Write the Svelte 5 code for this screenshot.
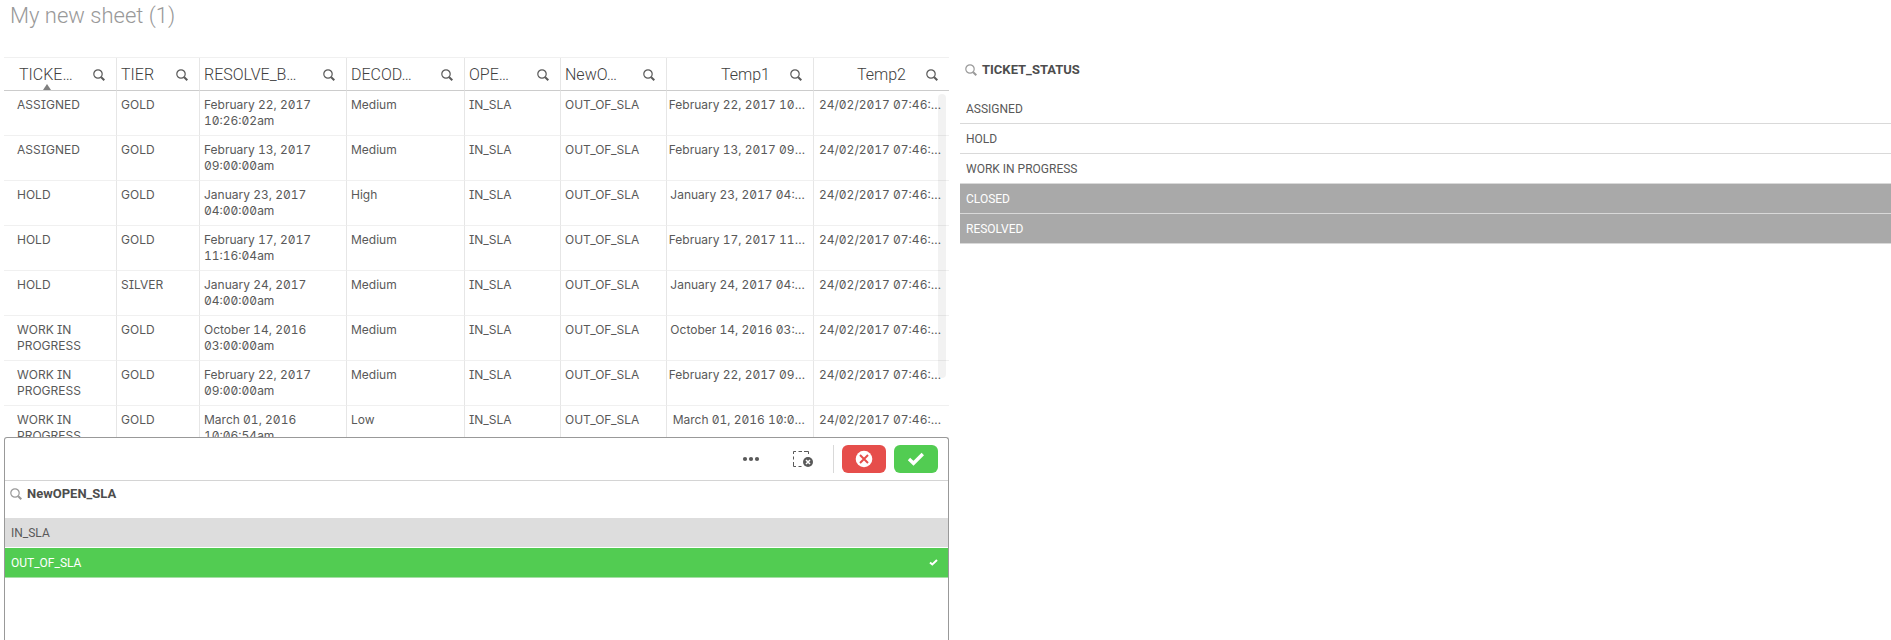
<script lang="ts">
    type Column = { label: string, width: number, measure?: boolean, sorted?: boolean }

    const columns: Column[] = [
        { label: 'TICKE…', width: 113, sorted: true },
        { label: 'TIER', width: 83 },
        { label: 'RESOLVE_B…', width: 147 },
        { label: 'DECOD…', width: 118 },
        { label: 'OPE…', width: 96 },
        { label: 'NewO…', width: 106 },
        { label: 'Temp1', width: 147, measure: true },
        { label: 'Temp2', width: 135, measure: true },
    ]
    const total = columns.reduce((sum, c) => sum + c.width, 0)

    const now = '24/02/2017 07:46:…'
    const rows = [
        ['ASSIGNED', 'GOLD', 'February 22, 2017 10:26:02am', 'Medium', 'IN_SLA', 'OUT_OF_SLA', 'February 22, 2017 10…', now],
        ['ASSIGNED', 'GOLD', 'February 13, 2017 09:00:00am', 'Medium', 'IN_SLA', 'OUT_OF_SLA', 'February 13, 2017 09…', now],
        ['HOLD', 'GOLD', 'January 23, 2017 04:00:00am', 'High', 'IN_SLA', 'OUT_OF_SLA', 'January 23, 2017 04:…', now],
        ['HOLD', 'GOLD', 'February 17, 2017 11:16:04am', 'Medium', 'IN_SLA', 'OUT_OF_SLA', 'February 17, 2017 11…', now],
        ['HOLD', 'SILVER', 'January 24, 2017 04:00:00am', 'Medium', 'IN_SLA', 'OUT_OF_SLA', 'January 24, 2017 04:…', now],
        ['WORK IN PROGRESS', 'GOLD', 'October 14, 2016 03:00:00am', 'Medium', 'IN_SLA', 'OUT_OF_SLA', 'October 14, 2016 03:…', now],
        ['WORK IN PROGRESS', 'GOLD', 'February 22, 2017 09:00:00am', 'Medium', 'IN_SLA', 'OUT_OF_SLA', 'February 22, 2017 09…', now],
        ['WORK IN PROGRESS', 'GOLD', 'March 01, 2016 10:06:54am', 'Low', 'IN_SLA', 'OUT_OF_SLA', 'March 01, 2016 10:0…', now],
    ]

    const statuses = [
        { name: 'ASSIGNED', state: 'possible' },
        { name: 'HOLD', state: 'possible' },
        { name: 'WORK IN PROGRESS', state: 'possible' },
        { name: 'CLOSED', state: 'excluded' },
        { name: 'RESOLVED', state: 'excluded' },
    ]

    const slaValues = ['IN_SLA', 'OUT_OF_SLA']
    let selected = $state('OUT_OF_SLA')
</script>

{#snippet searchIcon()}
    <svg class="search-icon" viewBox="0 0 12 12" aria-hidden="true">
        <circle cx="5" cy="5" r="4.2" />
        <path class="handle" d="M8.2 8.2 L11.3 11.2" />
    </svg>
{/snippet}

<div class="sheet">
    <h1>My new sheet (1)</h1>
    <main>
        <section class="left">
            <div class="table-wrap">
                <table>
                    <colgroup>
                        {#each columns as c}
                            <col style="width: {c.width / total * 100}%">
                        {/each}
                    </colgroup>
                    <thead>
                        <tr>
                            {#each columns as c}
                                <th class:measure={c.measure} class:sorted={c.sorted}>
                                    <div class="head">
                                        <span>{c.label}</span>
                                        <button class="icon" aria-label="Search {c.label}">{@render searchIcon()}</button>
                                    </div>
                                </th>
                            {/each}
                        </tr>
                    </thead>
                    <tbody>
                        {#each rows as row}
                            <tr>
                                {#each row as cell, i}
                                    <td class:measure={columns[i].measure}>{cell}</td>
                                {/each}
                            </tr>
                        {/each}
                    </tbody>
                </table>
                <div class="scrollbar"></div>
            </div>

            <div class="popup">
                <div class="toolbar">
                    <button class="tool" aria-label="More">
                        <svg width="18" height="6" viewBox="0 0 18 6">
                            <circle cx="3" cy="3" r="2.1" /><circle cx="9" cy="3" r="2.1" /><circle cx="15" cy="3" r="2.1" />
                        </svg>
                    </button>
                    <button class="tool" aria-label="Clear selection">
                        <svg width="20" height="17" viewBox="0 0 20 17">
                            <path class="dash" d="M.5 3V.5H3M5.5 .5H9M11 .5H15.5V3M.5 5.5V8.5M.5 11V15.5H3M5.5 15.5H8.5" />
                            <circle cx="15" cy="11" r="5" />
                            <path class="cross" d="M13 9L17 13M17 9L13 13" />
                        </svg>
                    </button>
                    <span class="divider"></span>
                    <button class="action cancel" aria-label="Cancel selection">
                        <svg width="18" height="18" viewBox="0 0 18 18">
                            <circle cx="9" cy="9" r="8.3" />
                            <path d="M5 5L13 13M13 5L5 13" />
                        </svg>
                    </button>
                    <button class="action confirm" aria-label="Confirm selection">
                        <svg width="18" height="14" viewBox="0 0 18 14"><path d="M2 7L6.5 11.3L15.8 2" /></svg>
                    </button>
                </div>
                <h2>
                    <button class="icon" aria-label="Search NewOPEN_SLA">{@render searchIcon()}</button>
                    NewOPEN_SLA
                </h2>
                <ul>
                    {#each slaValues as name}
                        <li>
                            <button class="value {name === selected ? 'selected' : 'alternative'}" onclick={() => selected = name}>
                                {name}
                                {#if name === selected}
                                    <svg width="9" height="7" viewBox="0 0 9 7"><path d="M1 3.5L3.3 5.5L8 1" /></svg>
                                {/if}
                            </button>
                        </li>
                    {/each}
                </ul>
            </div>
        </section>

        <section class="right">
            <h2>
                <button class="icon" aria-label="Search TICKET_STATUS">{@render searchIcon()}</button>
                TICKET_STATUS
            </h2>
            <ul>
                {#each statuses as s}
                    <li><button class="value {s.state}">{s.name}</button></li>
                {/each}
            </ul>
        </section>
    </main>
</div>

<style>
:global(body){
    background: #fff;
}

*{
    box-sizing: border-box;
}

.sheet{
    display: flex;
    flex-direction: column;
    height: 100vh;
    overflow: hidden;
    color: #595959;
    font-family: Roboto, "Liberation Sans", sans-serif;
}

h1{
    margin: 0;
    padding: 0 10px;
    height: 57px;
    flex: none;
    font-size: 22px;
    line-height: 32px;
    font-weight: 300;
    color: #999;
}

main{
    display: grid;
    grid-template-columns: 945fr 931fr;
    column-gap: 11px;
    flex: 1;
    min-height: 0;
    padding-left: 4px;
}

.left{
    display: grid;
    grid-template-rows: 380fr 203fr;
    min-width: 0;
    min-height: 0;
}

.table-wrap{
    position: relative;
    overflow: hidden;
    min-height: 0;
    border-top: 1px solid #f0f0f0;
}

table{
    width: 100%;
    table-layout: fixed;
    border-collapse: separate;
    border-spacing: 0;
}

th, td{
    border-right: 1px solid #e6e6e6;
    text-align: left;
    font-weight: 400;
}

th:last-child, td:last-child{
    border-right: 0;
}

th{
    position: relative;
    height: 33px;
    padding: 2px 11px 0 4px;
    border-bottom: 1px solid #ccc;
    font-size: 16px;
    line-height: 20px;
    font-weight: 300;
    color: #404040;
}

th:first-child{
    padding-left: 15px;
}

.head{
    display: flex;
    align-items: center;
    justify-content: space-between;
    white-space: nowrap;
}

.measure .head{
    justify-content: flex-end;
    gap: 20px;
}

.sorted::after{
    content: '';
    position: absolute;
    left: 39px;
    bottom: 0;
    border: 4px solid transparent;
    border-top: 0;
    border-bottom: 6px solid #808080;
}

td{
    height: 45px;
    padding: 6px 8px 6px 4px;
    border-bottom: 1px solid #f0f0f0;
    vertical-align: top;
    font-family: Inter, Roboto, sans-serif;
    font-size: 12px;
    line-height: 16px;
    font-feature-settings: 'zero', 'tnum', 'cv08';
}

td:first-child{
    padding-left: 13px;
}

td.measure{
    padding-left: 0;
    text-align: right;
    white-space: nowrap;
}

.scrollbar{
    position: absolute;
    top: 36px;
    right: 3px;
    width: 8px;
    height: 75%;
    border-radius: 4px;
    background: rgba(0, 0, 0, .05);
}

button{
    border: 0;
    padding: 0;
    background: none;
    color: inherit;
    font: inherit;
    cursor: pointer;
}

.icon, .icon svg{
    display: block;
    width: 12px;
    height: 12px;
}

.search-icon{
    fill: none;
    stroke: #595959;
    stroke-width: 1.2;
}

.search-icon .handle{
    stroke-width: 2;
}

h2 .search-icon{
    stroke: #999;
}

h2 .handle{
    stroke-width: 1.5;
}

.popup{
    min-height: 0;
    background: #fff;
    border: 1px solid #999;
    border-bottom: 0;
    border-radius: 3px 3px 0 0;
}

.toolbar{
    display: flex;
    align-items: center;
    justify-content: flex-end;
    gap: 8px;
    height: 43px;
    padding: 0 10px 0 0;
    border-bottom: 1px solid #d4d4d4;
}

.tool{
    display: grid;
    place-items: center;
    width: 44px;
    height: 28px;
    fill: #595959;
}

.dash{
    fill: none;
    stroke: #595959;
}

.cross{
    stroke: #fff;
    stroke-width: 1.5;
}

.divider{
    width: 1px;
    height: 28px;
    background: #d9d9d9;
}

.action{
    display: grid;
    place-items: center;
    width: 44px;
    height: 28px;
    border-radius: 6px;
}

.cancel{
    background: #e64e4b;
}

.cancel circle{
    fill: #fff;
}

.cancel path{
    stroke: #e64e4b;
    stroke-width: 2;
}

.confirm{
    background: #52cc52;
}

.confirm path{
    fill: none;
    stroke: #fff;
    stroke-width: 3.4;
}

h2{
    display: flex;
    align-items: center;
    gap: 5px;
    height: 37px;
    margin: 0;
    padding: 0 5px 12px;
    font-size: 13px;
    font-weight: 700;
    color: #4d4d4d;
}

ul{
    margin: 0;
    padding: 0;
    list-style: none;
}

.value{
    display: flex;
    align-items: center;
    justify-content: space-between;
    width: 100%;
    height: 30px;
    padding: 0 10px 0 6px;
    border-bottom: 1px solid #d9d9d9;
    font-size: 12px;
    text-align: left;
}

.alternative{
    background: #ddd;
    border-bottom-color: #fff;
}

.selected{
    background: #52cc52;
    border-bottom-color: #a6dfa6;
    color: #fff;
}

.selected path{
    fill: none;
    stroke: #fff;
    stroke-width: 2;
}

.excluded{
    background: #a9a9a9;
    color: #fff;
}
</style>
